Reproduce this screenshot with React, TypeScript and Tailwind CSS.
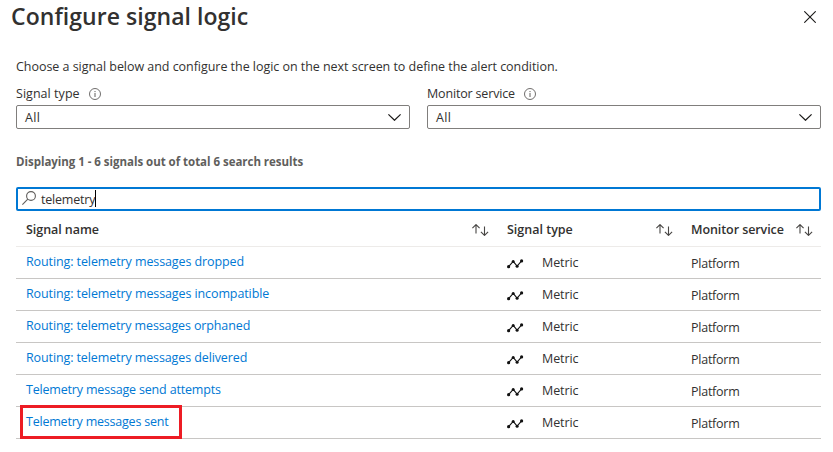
import type { ReactNode } from "react";

const rows = [
  { name: "Routing: telemetry messages dropped", tracking: "tracking-[-0.1px]" },
  { name: "Routing: telemetry messages incompatible", tracking: "tracking-[-0.1px]" },
  { name: "Routing: telemetry messages orphaned", tracking: "tracking-[-0.12px]" },
  { name: "Routing: telemetry messages delivered", tracking: "tracking-[-0.11px]" },
  { name: "Telemetry message send attempts", tracking: "tracking-[-0.18px]" },
  { name: "Telemetry messages sent", tracking: "tracking-[-0.21px]", highlighted: true },
];

function CloseIcon() {
  return (
    <svg width="12" height="12" viewBox="0 0 12 12" fill="none" stroke="#1b1a19" strokeWidth="1.1">
      <path d="M0.3 0.3L11.7 11.7M11.7 0.3L0.3 11.7" />
    </svg>
  );
}

function InfoIcon() {
  return (
    <svg width="12" height="12" viewBox="0 0 12 12" fill="none" stroke="#605e5c">
      <circle cx="6" cy="6" r="5.5" strokeWidth="0.9" />
      <path d="M6 5V9M6 3V4.1" strokeWidth="1" />
    </svg>
  );
}

function ChevronIcon() {
  return (
    <svg width="13" height="7" viewBox="0 0 13 7" fill="none" stroke="#1b1a19" strokeWidth="1.2">
      <path d="M0.4 0.4L6.5 6.3L12.6 0.4" />
    </svg>
  );
}

function SearchIcon() {
  return (
    <svg width="14" height="14" viewBox="0 0 14 14" fill="none" stroke="#605e5c" strokeWidth="1.1">
      <circle cx="9" cy="5" r="4.4" />
      <path d="M5.8 8.2L0.4 13.6" />
    </svg>
  );
}

function SortIcon() {
  return (
    <svg width="17" height="12" viewBox="0 0 17 12" fill="none" stroke="#484644" strokeWidth="1.1">
      <path d="M4 9.5V0.8M0.4 4.2L4 0.6L7.6 4.2" />
      <path d="M12.5 2.5V11.2M8.9 7.8L12.5 11.4L16.1 7.8" />
    </svg>
  );
}

function MetricIcon() {
  return (
    <svg width="17" height="10" viewBox="0 0 17 10" fill="#111" stroke="#111">
      <path d="M1.6 7.7L6.2 2.4L10.1 7.2L14.6 1.9" fill="none" strokeWidth="1.1" />
      <g stroke="none">
        <circle cx="1.6" cy="7.7" r="1.6" />
        <circle cx="6.2" cy="2.4" r="1.5" />
        <circle cx="10.1" cy="7.2" r="1.5" />
        <circle cx="14.6" cy="1.9" r="1.6" />
      </g>
    </svg>
  );
}

function SelectField({ label }: { label: ReactNode }) {
  return (
    <div className="w-[394px]">
      <div className="flex h-[22px] items-start gap-[9px]">
        {label}
        <span className="mt-[5px]"><InfoIcon /></span>
      </div>
      <div className="flex h-6 items-center justify-between rounded-[2px] border border-[#807e7c] pr-2 pl-2">
        <span className="mt-0.5 tracking-[0.3px]">All</span>
        <ChevronIcon />
      </div>
    </div>
  );
}

export default function App() {
  return (
    <div className="h-[452px] w-[833px] overflow-hidden bg-white font-['Open_Sans','Noto_Sans',sans-serif] text-[12.5px] leading-[22px] text-[#323130]">
      <header className="flex h-[56px] items-start justify-between pr-[17px] pl-[11px]">
        <h1 className="text-[23px] leading-8 font-semibold tracking-[0.05px] whitespace-nowrap">Configure signal logic</h1>
        <button className="mt-[11px]" aria-label="Close"><CloseIcon /></button>
      </header>
      <main className="w-[821px] pl-4">
        <p className="h-[27px] tracking-[-0.04px] whitespace-nowrap">Choose a signal below and configure the logic on the next screen to define the alert condition.</p>
        <div className="flex justify-between">
          <SelectField label={<span className="tracking-[0.04px] whitespace-nowrap">Signal type</span>} />
          <SelectField label={<span className="tracking-[-0.17px] whitespace-nowrap">Monitor service</span>} />
        </div>
        <p className="mt-[23px] h-[35px] text-[11.5px] leading-5 font-bold tracking-[-0.03px] whitespace-nowrap text-[#605e5c]">
          Displaying 1 - 6 signals out of total 6 search results
        </p>
        <div className="flex h-6 items-start rounded-[2px] border-2 border-[#0078d4] pl-1">
          <span className="mt-[2px] mr-[5px]"><SearchIcon /></span>
          <span className="tracking-[-0.2px]">telemetry</span>
          <span className="mt-[1px] h-[17px] w-px bg-black" />
        </div>
        <div className="flex h-9 items-start border-b border-[#edebe9] pt-2 pl-[10px] font-semibold">
          <span className="w-[446px] tracking-[-0.05px]">Signal name</span>
          <span className="mt-[5px] w-[35px]"><SortIcon /></span>
          <span className="w-[149px]">Signal type</span>
          <span className="mt-[5px] w-[35px]"><SortIcon /></span>
          <span className="w-[105px] tracking-[-0.08px] whitespace-nowrap">Monitor service</span>
          <span className="mt-[5px]"><SortIcon /></span>
        </div>
        {rows.map((row) => (
          <div key={row.name} className="relative flex h-8 items-start border-b border-[#c8c6c4] pl-[10px]">
            <a className={`mt-1 w-[481px] whitespace-nowrap text-[#0078d4] ${row.tracking}`}>{row.name}</a>
            <span className="mt-3 w-[35px]"><MetricIcon /></span>
            <span className="mt-[5px] w-[149px] tracking-[-0.08px]">Metric</span>
            <span className="mt-[6px] tracking-[-0.24px]">Platform</span>
            {row.highlighted && <div className="absolute -top-[2px] left-1 h-[34px] w-[162px] border-3 border-[#ed1c24]" />}
          </div>
        ))}
      </main>
    </div>
  );
}
